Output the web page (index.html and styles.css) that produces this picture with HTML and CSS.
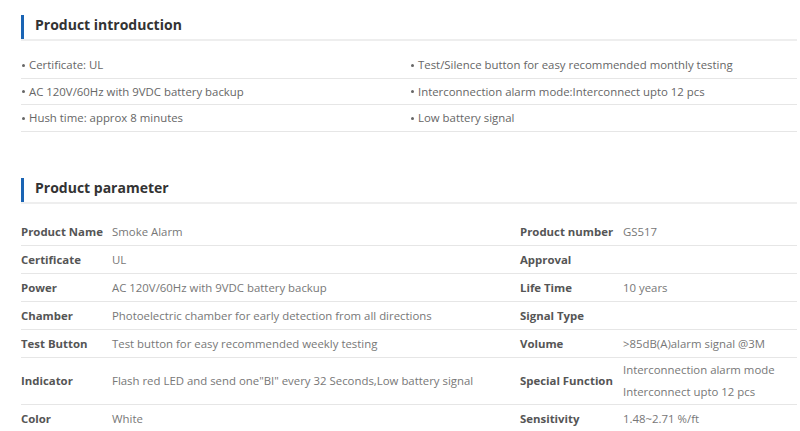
FILE: index.html
```html
<!DOCTYPE html>
<html>
<head>
<meta charset="utf-8">
<link rel="stylesheet" href="styles.css">
</head>
<body>
<div class="page">
  <section class="intro">
    <h2 class="sec-title"><span class="bar"></span><span class="title-text">Product introduction</span></h2>
    <ul class="intro-list">
      <li><span class="dot"></span>Certificate: UL</li>
      <li><span class="dot"></span>Test/Silence button for easy recommended monthly testing</li>
      <li><span class="dot"></span>AC 120V/60Hz with 9VDC battery backup</li>
      <li><span class="dot"></span>Interconnection alarm mode:Interconnect upto 12 pcs</li>
      <li><span class="dot"></span>Hush time: approx 8 minutes</li>
      <li><span class="dot"></span>Low battery signal</li>
    </ul>
  </section>
  <section class="params">
    <h2 class="sec-title"><span class="bar"></span><span class="title-text">Product parameter</span></h2>
    <div class="ptable">
      <div class="prow"><div class="lbl">Product Name</div><div class="val">Smoke Alarm</div><div class="lbl">Product number</div><div class="val">GS517</div></div>
      <div class="prow"><div class="lbl">Certificate</div><div class="val">UL</div><div class="lbl">Approval</div><div class="val"></div></div>
      <div class="prow"><div class="lbl">Power</div><div class="val">AC 120V/60Hz with 9VDC battery backup</div><div class="lbl">Life Time</div><div class="val">10 years</div></div>
      <div class="prow"><div class="lbl">Chamber</div><div class="val">Photoelectric chamber for early detection from all directions</div><div class="lbl">Signal Type</div><div class="val"></div></div>
      <div class="prow"><div class="lbl">Test Button</div><div class="val">Test button for easy recommended weekly testing</div><div class="lbl">Volume</div><div class="val">&gt;85dB(A)alarm signal @3M</div></div>
      <div class="prow tall"><div class="lbl">Indicator</div><div class="val">Flash red LED and send one"BI" every 32 Seconds,Low battery signal</div><div class="lbl">Special Function</div><div class="val multi">Interconnection alarm mode<br>Interconnect upto 12 pcs</div></div>
      <div class="prow"><div class="lbl">Color</div><div class="val">White</div><div class="lbl">Sensitivity</div><div class="val">1.48~2.71 %/ft</div></div>
    </div>
  </section>
</div>
</body>
</html>
```
FILE: styles.css
```css
html, body {
  margin: 0;
  padding: 0;
  background: #fff;
}
body {
  font-family: "Open Sans", "Noto Sans", sans-serif;
  font-size: 11.4px;
  color: #666;
}
.page {
  padding: 15px 3px 0 21px;
}
.sec-title {
  display: flex;
  align-items: flex-start;
  height: 24px;
  margin: 0;
  font-size: 14px;
  font-weight: 700;
  color: #333;
  border-bottom: 2px solid #eeeeee;
}
.bar {
  align-self: stretch;
  width: 3px;
  background: #1a64b4;
  margin-right: 11px;
}
.title-text {
  line-height: 19px;
}
.intro-list {
  list-style: none;
  margin: 0;
  padding: 11px 0 0 0;
  display: grid;
  grid-template-columns: 389px 1fr;
}
.intro-list li {
  height: 25.5px;
  display: flex;
  align-items: center;
  border-bottom: 1px solid #e6e6e6;
}
.dot {
  width: 3px;
  height: 3px;
  border-radius: 50%;
  background: #666;
  margin: 1px 4px 0 1px;
}
.params {
  margin-top: 46px;
}
.ptable {
  margin-top: 14px;
}
.prow {
  display: grid;
  grid-template-columns: 91px 408px 103px 1fr;
  align-items: center;
  height: 27px;
  border-bottom: 1px solid #e6e6e6;
}
.prow.tall {
  height: 46px;
}
.lbl {
  font-weight: 700;
  color: #555;
}
.val {
  color: #777;
}
.val.multi {
  line-height: 22px;
}
```
